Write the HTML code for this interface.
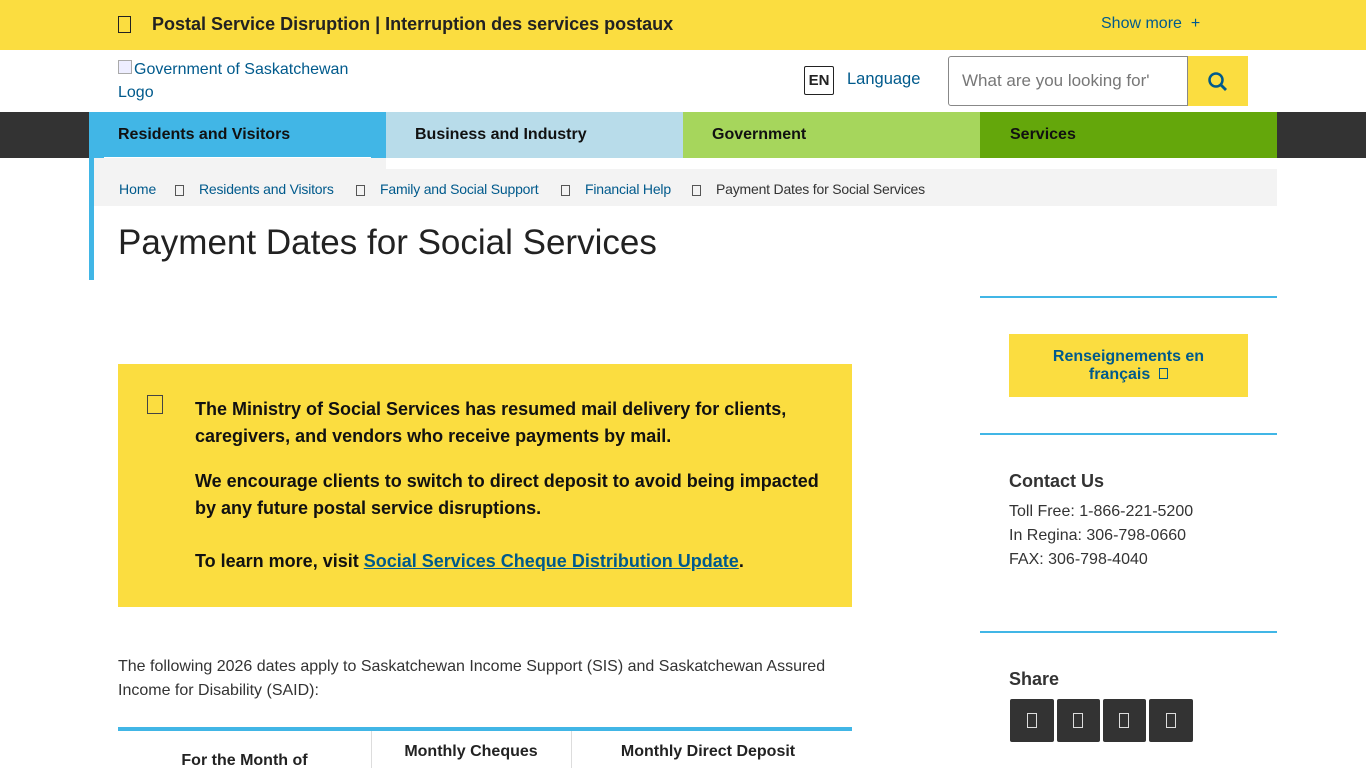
<!DOCTYPE html>
<html><head><meta charset="utf-8"><style>
*{box-sizing:border-box;margin:0;padding:0}
html,body{width:1366px;height:768px;overflow:hidden}
body{font-family:"Liberation Sans",Arial,sans-serif;background:#fff;position:relative;color:#222}
.a{position:absolute}
.box{display:inline-block;width:13px;height:17px;border:1.5px solid #222}
.sbox{display:inline-block;width:9px;height:11px;border:1px solid #555}
a{color:#005a8c;text-decoration:none}
.bc{position:absolute;top:181px;font-size:14px;color:#005a8c;white-space:nowrap}
</style></head><body>
<div class="a" style="left:0;top:0;width:1366px;height:50px;background:#fbdd40"></div>
<div class="a" style="left:118px;top:16px"><span class="box"></span></div>
<div class="a" style="left:152px;top:14px;font-size:18px;font-weight:bold;color:#222">Postal Service Disruption | Interruption des services postaux</div>
<div class="a" style="left:1101px;top:15px;font-size:16px;color:#005a8c">Show more&nbsp; +</div>

<div class="a" style="left:118px;top:60px;width:14px;height:14px;border:1px solid #aaa;background:#eef"></div>
<div class="a" style="left:118px;top:58px;font-size:16px;line-height:23px;color:#005a8c;width:240px;text-indent:16px">Government of Saskatchewan Logo</div>
<div class="a" style="left:804px;top:66px;width:30px;height:29px;border:1px solid #222;border-radius:2px;font-size:15px;font-weight:bold;text-align:center;line-height:27px">EN</div>
<div class="a" style="left:847px;top:70px;font-size:16.5px;color:#005a8c">Language</div>
<div class="a" style="left:948px;top:56px;width:240px;height:50px;border:1px solid #888;border-radius:3px 0 0 3px;padding:14px 13px;font-size:17px;color:#777;white-space:nowrap;overflow:hidden">What are you looking for'</div>
<div class="a" style="left:1188px;top:56px;width:60px;height:50px;background:#fbdd40">
<svg width="60" height="50"><circle cx="28" cy="24" r="6.5" fill="none" stroke="#005a8c" stroke-width="2.5"/><line x1="33" y1="29" x2="38" y2="34" stroke="#005a8c" stroke-width="2.8"/></svg></div>

<div class="a" style="left:0;top:112px;width:1366px;height:46px;background:#333"></div>
<div class="a" style="left:89px;top:112px;width:297px;height:57px;background:#41b6e6"></div>
<div class="a" style="left:104px;top:157px;width:267px;height:2px;background:#fff"></div>
<div class="a" style="left:386px;top:112px;width:297px;height:46px;background:#b8dcea"></div>
<div class="a" style="left:683px;top:112px;width:297px;height:46px;background:#a6d65c"></div>
<div class="a" style="left:980px;top:112px;width:297px;height:46px;background:#64a70b"></div>
<div class="a" style="left:118px;top:126px;font-size:16px;font-weight:bold;color:#111">Residents and Visitors</div>
<div class="a" style="left:415px;top:126px;font-size:16px;font-weight:bold;color:#111">Business and Industry</div>
<div class="a" style="left:712px;top:126px;font-size:16px;font-weight:bold;color:#111">Government</div>
<div class="a" style="left:1010px;top:126px;font-size:16px;font-weight:bold;color:#111">Services</div>

<div class="a" style="left:89px;top:158px;width:5px;height:122px;background:#41b6e6"></div>
<div class="a" style="left:94px;top:169px;width:1183px;height:37px;background:#f3f3f3"></div>
<div class="a" style="left:94px;top:158px;width:292px;height:11px;background:#f3f3f3"></div>
<div class="bc" style="left:119px">Home</div>
<div class="bc" style="left:175px;top:183px"><span class="sbox"></span></div>
<div class="bc" style="left:199px;letter-spacing:-0.2px">Residents and Visitors</div>
<div class="bc" style="left:356px;top:183px"><span class="sbox"></span></div>
<div class="bc" style="left:380px;letter-spacing:-0.2px">Family and Social Support</div>
<div class="bc" style="left:561px;top:183px"><span class="sbox"></span></div>
<div class="bc" style="left:585px;letter-spacing:-0.2px">Financial Help</div>
<div class="bc" style="left:692px;top:183px"><span class="sbox"></span></div>
<div class="bc" style="left:716px;color:#333;letter-spacing:-0.2px">Payment Dates for Social Services</div>
<div class="a" style="left:118px;top:223px;font-size:35px;color:#222">Payment Dates for Social Services</div>

<div class="a" style="left:118px;top:364px;width:734px;height:243px;background:#fbdd40"></div>
<div class="a" style="left:147px;top:395px"><span class="box" style="width:16px;height:19px;border-color:#444"></span></div>
<div class="a" style="left:195px;top:396px;width:630px;font-size:18px;font-weight:bold;line-height:27px;color:#111">The Ministry of Social Services has resumed mail delivery for clients, caregivers, and vendors who receive payments by mail.</div>
<div class="a" style="left:195px;top:468px;width:630px;font-size:18px;font-weight:bold;line-height:27px;color:#111">We encourage clients to switch to direct deposit to avoid being impacted by any future postal service disruptions.</div>
<div class="a" style="left:195px;top:548px;font-size:18px;font-weight:bold;line-height:27px;color:#111">To learn more, visit <span style="color:#005a8c;text-decoration:underline">Social Services Cheque Distribution Update</span>.</div>

<div class="a" style="left:118px;top:655px;width:730px;font-size:16px;line-height:24px;color:#333">The following 2026 dates apply to Saskatchewan Income Support (SIS) and Saskatchewan Assured Income for Disability (SAID):</div>
<div class="a" style="left:118px;top:727px;width:734px;height:4px;background:#41b6e6"></div>
<div class="a" style="left:371px;top:731px;width:1px;height:40px;background:#ddd"></div>
<div class="a" style="left:571px;top:731px;width:1px;height:40px;background:#ddd"></div>
<div class="a" style="left:118px;top:752px;width:253px;text-align:center;font-size:16px;font-weight:bold">For the Month of</div>
<div class="a" style="left:401px;top:740px;width:140px;text-align:center;font-size:16px;font-weight:bold;line-height:24px">Monthly Cheques Mailed</div>
<div class="a" style="left:606px;top:740px;width:204px;text-align:center;font-size:16px;font-weight:bold;line-height:24px">Monthly Direct Deposit Payments are Deposited</div>

<div class="a" style="left:980px;top:296px;width:297px;height:2px;background:#41b6e6"></div>
<div class="a" style="left:1009px;top:334px;width:239px;height:63px;background:#fbdd40;text-align:center;font-size:16px;font-weight:bold;color:#005a8c;line-height:18px;padding-top:14px">Renseignements en<br>français&nbsp; <span class="sbox" style="border-color:#005a8c"></span></div>
<div class="a" style="left:980px;top:433px;width:297px;height:2px;background:#41b6e6"></div>
<div class="a" style="left:1009px;top:471px;font-size:18px;font-weight:bold;color:#333">Contact Us</div>
<div class="a" style="left:1009px;top:500px;font-size:16px;line-height:24px;color:#333">Toll Free: 1-866-221-5200<br>In Regina: 306-798-0660<br>FAX: 306-798-4040</div>
<div class="a" style="left:980px;top:631px;width:297px;height:2px;background:#41b6e6"></div>
<div class="a" style="left:1009px;top:669px;font-size:18px;font-weight:bold;color:#333">Share</div>
<div class="a" style="left:1010px;top:699px;width:44px;height:43px;background:#333;border-radius:2px"></div>
<div class="a" style="left:1057px;top:699px;width:43px;height:43px;background:#333;border-radius:2px"></div>
<div class="a" style="left:1103px;top:699px;width:43px;height:43px;background:#333;border-radius:2px"></div>
<div class="a" style="left:1149px;top:699px;width:44px;height:43px;background:#333;border-radius:2px"></div>
<div class="a" style="left:1027px;top:713px;width:10px;height:15px;border:1px solid #ddd"></div>
<div class="a" style="left:1073px;top:713px;width:10px;height:15px;border:1px solid #ddd"></div>
<div class="a" style="left:1119px;top:713px;width:10px;height:15px;border:1px solid #ddd"></div>
<div class="a" style="left:1166px;top:713px;width:10px;height:15px;border:1px solid #ddd"></div>
</body></html>
